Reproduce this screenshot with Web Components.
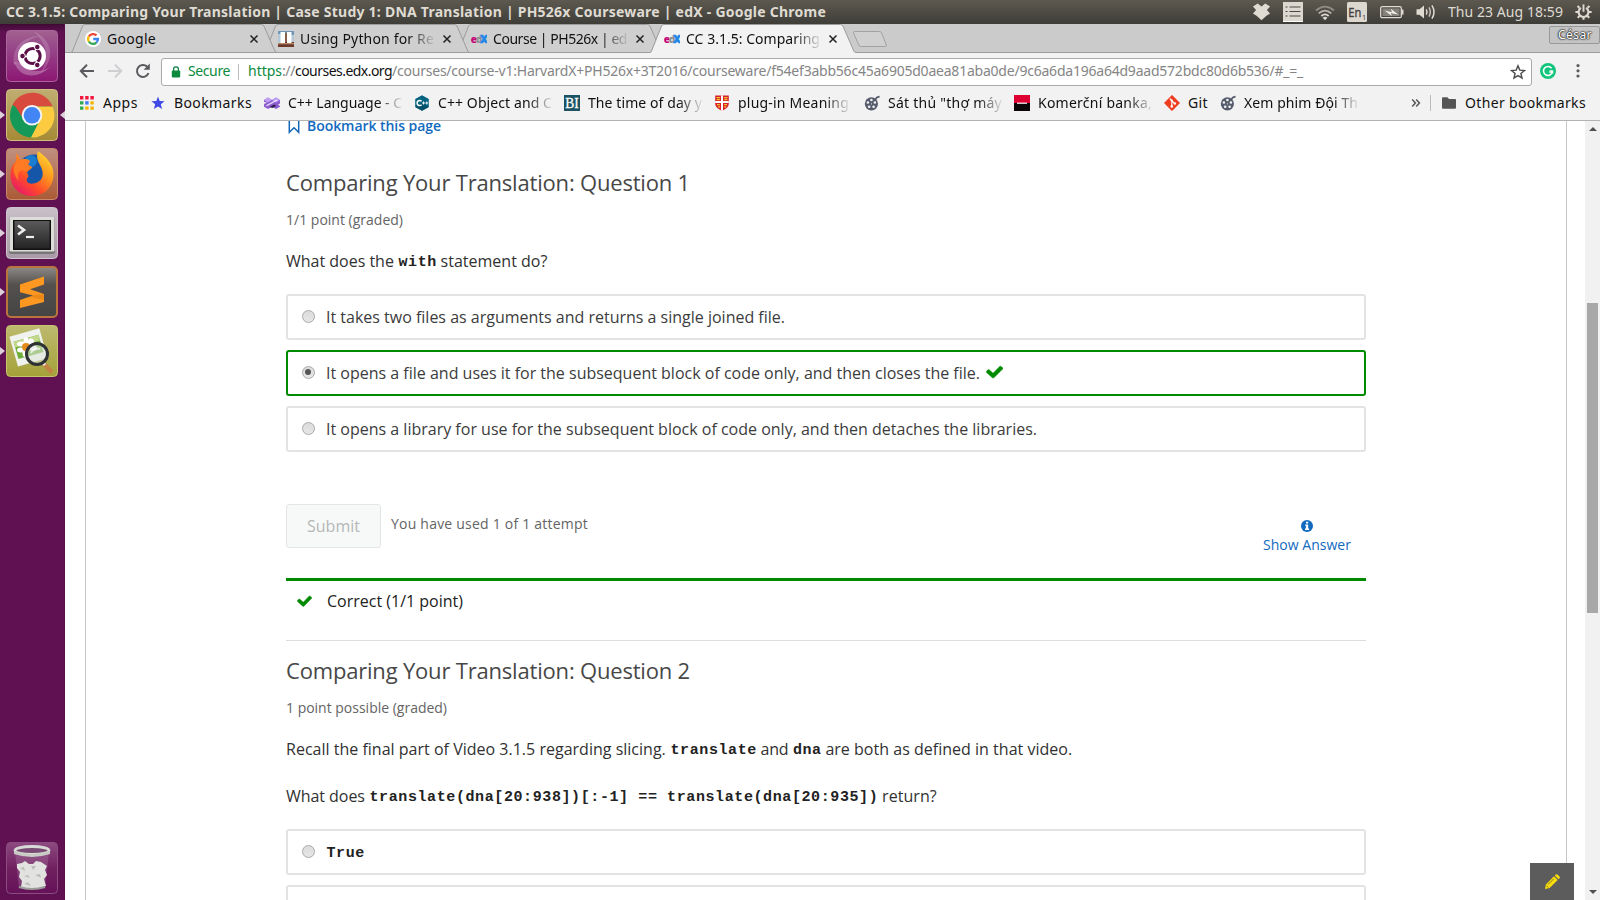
<!DOCTYPE html>
<html lang="en">
<head>
<meta charset="utf-8">
<title>CC 3.1.5: Comparing Your Translation</title>
<style>
html,body{margin:0;height:100%;overflow:hidden;background:#fff;font-family:"Open Sans","Noto Sans",sans-serif}
</style>
</head>
<body>
<desktop-screen></desktop-screen>
<script>
const ICONS = {
google:['0 0 16 16','<circle cx="8" cy="8" r="8" fill="#fff"/><g fill="none" stroke-width="2.3"><path d="M3.9 5.4A5 5 0 0 1 11.5 4.4" stroke="#ea4335"/><path d="M3.9 5.4A5 5 0 0 0 3.9 10.6" stroke="#fbbc05"/><path d="M3.9 10.6A5 5 0 0 0 11.4 11.6" stroke="#34a853"/><path d="M8.2 8H13A5 5 0 0 1 11.4 11.6" stroke="#4285f4"/></g>'],
photo:['0 0 16 16','<rect width="16" height="16" fill="#6f96b8"/><rect y="10" width="16" height="6" fill="#6b3a2a"/><path d="M0 3h3v9H0zM13 4h3v7h-3z" fill="#b4c8d6"/><path d="M2.500 1h4.500v11H2.500zM9 1h4.500v11H9z" fill="#fff"/><path d="M7 2h2v9H7z" fill="#8b5c48"/><path d="M0 12h16v1.3H0z" fill="#b98a6c"/>'],
edx:['0 0 16 16','<g font-family="Open Sans,sans-serif" font-weight="800"><text x="-.2" y="12" font-size="10" fill="#c5057b">e</text><text x="4.8" y="12" font-size="10" fill="#8a8f94">d</text><text x="9.2" y="12" font-size="10.5" fill="#1f86e8" stroke="#1f86e8" stroke-width=".5">X</text></g>'],
close:['0 0 10 10','<path d="M1.5 1.5l7 7M8.5 1.5l-7 7" stroke="#222" stroke-width="1.5"/>'],
back:['0 0 16 16','<path d="M15 8H2.5M8 1.8L1.8 8 8 14.2" fill="none" stroke="#5a5a5e" stroke-width="2"/>'],
fwd:['0 0 16 16','<path d="M1 8h12.5M8 1.8L14.2 8 8 14.2" fill="none" stroke="#cfcfd1" stroke-width="2"/>'],
reload:['0 0 16 16','<path d="M13.5 10.2A6 6 0 1 1 12.2 3.7" fill="none" stroke="#5a5a5e" stroke-width="2"/><path d="M14.8 .6v6.2H8.6z" fill="#5a5a5e"/>'],
lock:['0 0 10 12','<path d="M2.6 5.5V3.3a2.4 2.4 0 0 1 4.8 0v2.2" fill="none" stroke="#0b8043" stroke-width="1.3"/><rect x=".8" y="4.6" width="8.4" height="6.8" rx=".8" fill="#0b8a3e"/>'],
star:['0 0 16 16','<path d="M8 1.8l1.8 4.3 4.7.4-3.6 3 1.1 4.6L8 11.6l-4 2.5 1.1-4.6-3.6-3 4.7-.4z" fill="none" stroke="#4a4a4a" stroke-width="1.4"/>'],
grammarly:['0 0 16 16','<circle cx="8" cy="8" r="8" fill="#12c57c"/><path d="M11.6 5.2A4.5 4.5 0 1 0 12.4 9H9.2" fill="none" stroke="#fff" stroke-width="1.5"/><path d="M9.4 7.3h3.8v3.6z" fill="#fff"/>'],
dots:['0 0 4 16','<g fill="#5a5a5a"><circle cx="2" cy="2.6" r="1.6"/><circle cx="2" cy="7.8" r="1.6"/><circle cx="2" cy="13" r="1.6"/></g>'],
apps:['0 0 16 16','<path d="M1 1h3.4v3.4H1zM6.2 1h3.4v3.4H6.2zM11.4 1h3.4v3.4h-3.4z" fill="#f3163d"/><path d="M1 6.2h3.4v3.4H1zM1 11.4h3.4v3.4H1z" fill="#2ca94f"/><path d="M6.2 6.2h3.4v3.4H6.2z" fill="#4678f0"/><path d="M11.4 6.2h3.4v3.4h-3.4zM6.2 11.4h3.4v3.4H6.2zM11.4 11.4h3.4v3.4h-3.4z" fill="#f7b500"/>'],
bmstar:['0 0 16 16','<path d="M8 1.5l1.7 4.6 4.9.2-3.8 3 1.3 4.8L8 11.4l-4.1 2.7 1.3-4.8-3.8-3 4.9-.2z" fill="#4048e8"/>'],
cpl:['0 0 16 16','<path d="M0 5l4-2.500L8 5l4-2.500L16 5v3.500l-2 1.300 2 1.200v.8L12 14l-4-2.200L4 14l-4-2.200V9l3-1.600L0 7z" fill="#8d5ed0"/><path d="M0 5l4-2.500L8 5l4-2.500L16 5l-4 2.400L8 5 4 7.400z" fill="#bfa0f2"/><path d="M2.500 10.800L13 5" stroke="#efe6ff" stroke-width="1.300"/><path d="M5.500 12l4.500-2.600 2.500 1.400-4 2.200z" fill="#2f2150"/>'],
cpp:['0 0 16 16','<path d="M8 .2l6.8 3.9v7.8L8 15.8l-6.8-3.9V4.1z" fill="#056380"/><path d="M8 8l6.8 3.9L8 15.8l-6.8-3.9z" fill="#03506a"/><path d="M7.6 6.2a2.6 2.6 0 1 0 0 3.6" stroke="#fff" stroke-width="1.5" fill="none"/><path d="M8 8h3M9.5 6.5v3M11.3 8h3M12.8 6.5v3" stroke="#fff" stroke-width=".9"/>'],
bi:['0 0 16 16','<rect width="16" height="16" fill="#1c5264"/><text x="8" y="13" font-family="Liberation Serif,serif" font-size="14.500" text-anchor="middle" fill="#fff" stroke="#fff" stroke-width=".3" textLength="13.500" lengthAdjust="spacingAndGlyphs">BI</text>'],
shield:['0 0 16 16','<path d="M1.2.5h13.6v8c0 3.6-3.4 5.8-6.8 7.2C4.6 14.300 1.2 12.100 1.2 8.500z" fill="#d6202b"/><path d="M8 .5v15.200M1.200 7h13.600" stroke="#fff" stroke-width="2"/><path d="M2.400 2h3.600v1.200H2.400zM2.800 4h3v1.200h-3zM10 2h3.600v1.200H10zM10.300 4h3v1.200h-3zM3 9h2.800v1.200H3zM4 11.200h2v1.200H4zM10.200 9H13v1.200h-2.800zM10.200 11.200h2v1.200h-2z" fill="#f5c52c"/>'],
film:['0 0 16 16','<circle cx="7.400" cy="8.800" r="6.600" fill="#565c6c"/><path d="M11 4.500Q13 1.500 15.600 1.600" fill="none" stroke="#565c6c" stroke-width="1.600"/><g fill="#f2f2f2"><circle cx="7.400" cy="5" r="1.300"/><circle cx="3.900" cy="7.500" r="1.300"/><circle cx="10.900" cy="7.500" r="1.300"/><circle cx="5.200" cy="11.700" r="1.300"/><circle cx="9.600" cy="11.700" r="1.300"/><circle cx="7.400" cy="8.800" r=".6"/></g>'],
kb:['0 0 16 16','<rect width="16" height="16" fill="#0a0506"/><rect width="16" height="8" fill="#de0030"/><rect x="3" y="7.600" width="10" height="1.200" fill="#fff"/>'],
git:['0 0 16 16','<path d="M8 .300L15.700 8 8 15.700.300 8z" fill="#f03c1e" stroke="#f03c1e" stroke-linejoin="round" stroke-width=".6"/><path d="M5.800 3.500l2 2v6M8 6l2.700 2.500" stroke="#fff" stroke-width="1.100" fill="none"/><g fill="#fff"><circle cx="7.800" cy="5.600" r="1.200"/><circle cx="7.800" cy="11.400" r="1.300"/><circle cx="10.800" cy="8.500" r="1.300"/></g>'],
folder:['0 0 16 16','<path d="M1 3.200Q1 2.200 2 2.200h4.400l1.600 1.700h6q1 0 1 1v7.900q0 1-1 1H2q-1 0-1-1z" fill="#555"/>'],
more:['0 0 10 10','<path d="M1.200 1.600L4.400 5 1.200 8.400M5.200 1.600L8.400 5 5.200 8.400" fill="none" stroke="#555" stroke-width="1.500"/>'],
dropbox:['0 0 20 20','<path d="M6 1.500L10 4.800l4-3.300L19 4.800 15.700 8.400 19 12l-3.800 2.600L10 19.300l-5.200-4.700L1 12l3.300-3.600L1 4.800z" fill="#dfdbd2"/>'],
list:['0 0 20 20','<rect width="20" height="20" fill="#dcd8d0"/><path d="M2.500 5h2M6.500 5h11M2.500 9.500h2M6.500 9.500h11M2.500 14h2M6.500 14h11" stroke="#4a4944" stroke-width="1.200"/><path d="M0 19.500h20" stroke="#fff"/>'],
wifi:['0 0 20 20','<g fill="none" stroke-width="1.800"><path d="M1 8.500Q10 .8 19 8.500" stroke="#8f8c84"/><path d="M3.700 11.400Q10 5.800 16.300 11.400" stroke="#bab6ae"/><path d="M6.300 14Q10 10.800 13.700 14" stroke="#dfdbd2"/></g><path d="M10 18.300l-2.400-2.600q2.400-1.700 4.800 0z" fill="#dfdbd2"/>'],
en:['0 0 20 20','<rect width="20" height="20" rx="1.500" fill="#dcd8d0"/><text x="1.300" y="15" font-family="Open Sans,sans-serif" font-size="13" fill="#42413c" stroke="#42413c" stroke-width=".4" textLength="13" lengthAdjust="spacingAndGlyphs">En</text><text x="15" y="18" font-family="Open Sans,sans-serif" font-size="7.500" fill="#42413c">1</text>'],
battery:['0 0 24 14','<rect x=".7" y="1.700" width="20.600" height="11" rx="1.500" fill="none" stroke="#dfdbd2" stroke-width="1.300"/><rect x="2.500" y="3.400" width="17" height="7.600" fill="#85827b"/><path d="M22.600 4.600v5" stroke="#dfdbd2" stroke-width="1.800"/><path d="M4.500 5.500l7.500 1.700-1.200-3.500 7.500 6-7.500-1.800 1 3.200z" fill="#f2efe8"/>'],
volume:['0 0 20 16','<path d="M.5 5.200h3L8 1.500v13L3.500 10.800h-3z" fill="#dfdbd2"/><g fill="none" stroke="#dfdbd2" stroke-width="1.500"><path d="M10.300 5.400q1.500 2.600 0 5.200"/><path d="M13 3.400q2.600 4.600 0 9.200" stroke="#c9c5bd"/><path d="M15.900 1.300q4.200 6.700 0 13.400"/></g>'],
power:['0 0 18 18','<g fill="none" stroke="#dfdbd2"><path d="M6.200 5.200A5.200 5.200 0 1 0 11.800 5.200" stroke-width="2.200"/><path d="M9 1.500v7.800" stroke-width="2"/><path d="M4.600 5.100L2.700 3.200M13.400 5.100l1.900-1.900M3.200 9.600H.4M17.600 9.600h-2.800M4.800 13.800l-1.900 1.900M13.200 13.800l1.900 1.900M9 15v2.800" stroke-width="2.200"/></g>'],
check:['0 0 16 14','<path d="M15.700 3.600L7.600 11.800q-.9.900-1.800 0L.5 6.900q-.5-.6 0-1.100l1.300-1.300q.6-.5 1.200 0l3.700 3.200L12.900 1.300q.6-.5 1.200 0l1.600 1.300q.5.500 0 1z" fill="#008a00" stroke="#008a00" stroke-width=".5"/>'],
bookmark:['0 0 12 15','<path d="M1.300 1h9.400v12.300L6 8.800l-4.700 4.500z" fill="none" stroke="#1466b8" stroke-width="1.500"/>'],
info:['0 0 12 12','<circle cx="6" cy="6" r="6" fill="#126ac0"/><path d="M5 1.800h2.200v1.700H5zM4.200 4.600h3v4h.9v1.300H4V8.600h.9V5.800h-.7z" fill="#fff"/>'],
pencil:['0 0 16 16','<path d="M1 15l.9-4.600L10 2.300l3.700 3.700-8.100 8.100z" fill="#f8dc0c"/><path d="M10.800 1.500l1-1q.8-.6 1.600 0l2.100 2.100q.6.8 0 1.600l-1 1z" fill="#f8dc0c"/><path d="M4 10.600l5.800-5.800M2.500 11.700l1.800 1.800" stroke="#77702f" stroke-width=".9"/>'],
ubuntu:['0 0 52 52','<defs><linearGradient id="g" x2="0" y2="1"><stop stop-color="#a2628f"/><stop offset=".35" stop-color="#97468a"/><stop offset="1" stop-color="#8d1673"/></linearGradient></defs><rect x=".5" y=".5" width="51" height="51" rx="4" fill="url(#g)" stroke="#a9659b"/><path d="M8 35C5 18 17 6 34 6 20 9 12 19 14 30" fill="#fff" opacity=".16"/><path d="M27 1C47 10 50 29 34 44 44 28 42 14 27 1z" fill="#fff" opacity=".17"/><path d="M8 32C14 49 32 49 44 37 35 43 22 43 13 32z" fill="#fff" opacity=".25"/><circle cx="26" cy="26" r="14" fill="#fff"/><circle cx="26.500" cy="26" r="7.600" fill="none" stroke="#5c1048" stroke-width="3" stroke-dasharray="14.300 1.600" stroke-dashoffset="-8"/><g fill="#5c1048" stroke="#fff" stroke-width="1"><circle cx="16.500" cy="26" r="2.800"/><circle cx="31.300" cy="17" r="2.800"/><circle cx="31.300" cy="35" r="2.800"/></g>'],
chrome:['0 0 52 52','<defs><linearGradient id="g" x2="0" y2="1"><stop stop-color="#c0ad72"/><stop offset="1" stop-color="#a58a35"/></linearGradient></defs><rect x=".5" y=".5" width="51" height="51" rx="4" fill="url(#g)" stroke="#cfbe82"/><circle cx="26" cy="26.500" r="22" fill="#149958"/><path d="M26 26.500L6.500 16A22 22 0 0 1 46.600 17.500L26 17.500z" fill="#d94a3e"/><path d="M26 17.500H46.500A22 22 0 0 1 25 48.500L34 31z" fill="#fdcb3f"/><path d="M7.500 14.500L18 31l8-13.500z" fill="#d94a3e"/><circle cx="26" cy="26.300" r="10.300" fill="#f4f4f4"/><circle cx="26" cy="26.300" r="8.300" fill="#4285f4"/>'],
firefox:['0 0 52 52','<defs><linearGradient id="g" x2="0" y2="1"><stop stop-color="#c09080"/><stop offset="1" stop-color="#ab5a35"/></linearGradient><linearGradient id="f" x1="1" y1="0" x2=".2" y2="1"><stop stop-color="#ffe93a"/><stop offset=".4" stop-color="#ff9a1e"/><stop offset=".7" stop-color="#ff4a2a"/><stop offset="1" stop-color="#e5156e"/></linearGradient></defs><rect x=".5" y=".5" width="51" height="51" rx="4" fill="url(#g)" stroke="#c78b6c"/><circle cx="28" cy="23" r="16.500" fill="#1556a8"/><circle cx="25" cy="13" r="6" fill="#1c8fe0" opacity=".7"/><path d="M32 3c8 6 16 13 15.500 24C47 40 37 48 26 48 13 48 4 38 4.500 26c.2-6 2.500-10 5.500-13l.500-8 4 7c3-1.500 7-1 9 .500l-2 4 5 3-5 4c-1 2 1 3 1 5-4 4-1 8 5 7 7-1 10-6 9-12-1-7-8-11-4.500-20.500z" fill="url(#f)"/><path d="M10 14c4-3 10-3 14-1l-2 4 4 2-5 4-5-1c-4 1-5 6-3 11-6-6-7-13-3-19z" fill="#ff7a22"/>'],
terminal:['0 0 52 52','<defs><linearGradient id="g" x2="0" y2="1"><stop stop-color="#c9c0c8"/><stop offset="1" stop-color="#aa9aa9"/></linearGradient><linearGradient id="t" x2="0" y2="1"><stop stop-color="#5a5a5a"/><stop offset="1" stop-color="#242424"/></linearGradient></defs><rect x=".5" y=".5" width="51" height="51" rx="4" fill="url(#g)" stroke="#cfc5cf"/><rect x="3" y="10" width="46" height="37" rx="2" fill="#777"/><rect x="3.500" y="10" width="45" height="34.500" rx="1" fill="#dcdcd8"/><rect x="7" y="13" width="38" height="30" fill="#111"/><rect x="8.500" y="14" width="35" height="27.500" fill="url(#t)"/><path d="M12 18.500l6 4.500-6 4.500" fill="none" stroke="#eee" stroke-width="2.600"/><path d="M20 30h8" stroke="#eee" stroke-width="2.200"/>'],
sublime:['0 0 52 52','<defs><linearGradient id="g" x2="0" y2="1"><stop stop-color="#8c8986"/><stop offset=".35" stop-color="#54514f"/><stop offset="1" stop-color="#444"/></linearGradient></defs><rect x="1" y="1" width="50" height="50" rx="4" fill="url(#g)" stroke="#b9753c" stroke-width="2"/><path d="M14 18.500L38 10.500v8L24 23.300l14 4.800v8L14 42v-8l13-4.400L14 26.200z" fill="#ff9820"/><path d="M38 28v6L24 31l5-2z" fill="#d87a12" opacity=".5"/>'],
viewer:['0 0 52 52','<defs><linearGradient id="g" x2="0" y2="1"><stop stop-color="#bdb96f"/><stop offset="1" stop-color="#a5a23a"/></linearGradient></defs><rect x=".5" y=".5" width="51" height="51" rx="4" fill="url(#g)" stroke="#c6c46c"/><g transform="rotate(-16 22 22)"><rect x="7" y="7" width="31" height="31" fill="#f0f2f0"/><rect x="9.500" y="13" width="26" height="18" fill="#6fae38"/><path d="M9.500 13h26v6h-26z" fill="#c3d88c"/></g><g fill="#fff"><ellipse cx="20" cy="16" rx="2.500" ry="4"/><ellipse cx="15" cy="19" rx="4" ry="2.500"/><ellipse cx="15" cy="25" rx="4" ry="2.500"/><ellipse cx="25" cy="17" rx="3" ry="3.500"/><ellipse cx="19" cy="28" rx="2.500" ry="4"/><ellipse cx="27" cy="23" rx="4" ry="3"/></g><circle cx="20" cy="22" r="4" fill="#e58a1c"/><path d="M38 39l8 8.500" stroke="#c28345" stroke-width="4.500"/><path d="M36 37l3 3" stroke="#eee" stroke-width="3"/><circle cx="31" cy="29" r="10.500" fill="#dce3d8" fill-opacity=".55" stroke="#2e3235" stroke-width="3"/><path d="M25 28q3-6 9-4" stroke="#fff" stroke-width="2" fill="none" opacity=".7"/>'],
trash:['0 0 52 52','<defs><linearGradient id="g" x2="0" y2="1"><stop stop-color="#8d4a80"/><stop offset=".5" stop-color="#702060"/><stop offset="1" stop-color="#66125a"/></linearGradient></defs><rect x=".5" y=".5" width="51" height="51" rx="4" fill="url(#g)" stroke="#8b4c80"/><path d="M9 10h34l-4 36q-13 4-26 0z" fill="#b58fae" opacity=".3"/><path d="M11 22l5-1 3-2 4 3 4 0 3-3 5 1 3 2 3 2-2 4 2 5-3 4 2 7-7 2-9 1-9-2 1-6-3-4 1-5-3-4z" fill="#e2e2e0"/><path d="M14 26l4-1 1 4zM25 24l2 4 3-4zM18 34l4-1 2 3zM29 33l5-1 1 4zM18 42l4-2 3 4zM30 43l4-2z" fill="#bdbdba"/><path d="M13 45q13 4 26 0" stroke="#9c9c9a" stroke-width="2" fill="none"/><ellipse cx="26" cy="8.500" rx="17" ry="4" fill="#7a4b72" stroke="#d8dad5" stroke-width="2.800"/><path d="M8 9v3q18 6 36 0V9q-18 6-36 0z" fill="#c9cbc5"/>']
};

const define = (name, css, html, init) => customElements.define(name, class extends HTMLElement {
  constructor(){ super(); this.attachShadow({mode:'open'}); }
  connectedCallback(){
    if (this.ready) return;
    this.ready = true;
    const a = n => this.getAttribute(n) || '';
    this.shadowRoot.innerHTML = `<style>*{box-sizing:border-box}${css}</style>` + (typeof html === 'function' ? html(a) : html);
    if (init) init(this, a);
  }
});

define('ui-icon', ':host{display:block;flex:none}svg{display:block;width:100%;height:100%}', a => {
  const [vb, body] = ICONS[a('name')];
  return `<svg viewBox="${vb}" aria-hidden="true">${body}</svg>`;
}, (el, a) => {
  const [, , w, h] = ICONS[a('name')][0].split(' ');
  el.style.width = (a('w') || w) + 'px';
  el.style.height = (a('h') || h) + 'px';
});

/* Text run whose tracking is adjusted so that it fills a given width. */
define('fit-text', ':host{display:inline-block;white-space:pre;flex:none}', '<slot></slot>', (el, a) => {
  const n = el.textContent.length, w = parseFloat(a('w'));
  el.style.letterSpacing = ((w - el.getBoundingClientRect().width) / n) + 'px';
  el.style.width = w + 'px';
  if (a('fade')) el.style.webkitMaskImage = `linear-gradient(to right,#000 calc(100% - ${a('fade')}px),rgba(0,0,0,.08))`;
});

define('menu-bar', `:host{display:flex;align-items:center;height:24px;padding:0 8px 1px 6px;background:linear-gradient(#5d5950,#3e3d38);color:#dfdbd2;font:14px/22px "Noto Sans",sans-serif}
b{flex:1}.tray{display:flex;align-items:center}`,
`<b><fit-text w="820">CC 3.1.5: Comparing Your Translation | Case Study 1: DNA Translation | PH526x Courseware | edX - Google Chrome</fit-text></b>
<div class="tray">
<ui-icon name="dropbox" w="19" h="19" style="margin-right:12px"></ui-icon>
<ui-icon name="list" style="margin-right:12px"></ui-icon>
<ui-icon name="wifi" style="margin-right:12px"></ui-icon>
<ui-icon name="en" style="margin-right:13px"></ui-icon>
<ui-icon name="battery" style="margin-right:12px"></ui-icon>
<ui-icon name="volume" style="margin-right:12px"></ui-icon>
<fit-text w="115" style="margin-right:12px">Thu 23 Aug 18:59</fit-text>
<ui-icon name="power" w="17" h="17"></ui-icon></div>`);

define('launcher-item', `:host{display:flex;align-items:center;width:65px;height:52px}
i{width:0;height:0;border:4px solid transparent;border-left:5px solid #ddd0da;border-right:0;margin-right:1px}
i.off{visibility:hidden}i.r{border-left:0;border-right:5px solid #ddd0da;margin:0 0 0 2px}`,
a => `<i class="${a('run') ? '' : 'off'}"></i><ui-icon name="${a('icon')}"></ui-icon>${a('active') ? '<i class="r"></i>' : ''}`);

define('app-launcher', `:host{display:flex;flex-direction:column;gap:7px;width:65px;flex:none;padding:6px 0;background:linear-gradient(#3f0a35,#5f1151 8px,#5f1151);box-shadow:inset -1px 0 #54104a}
.sp{flex:1}`,
`<launcher-item icon="ubuntu"></launcher-item><launcher-item icon="chrome" run="1" active="1"></launcher-item><launcher-item icon="firefox" run="1"></launcher-item><launcher-item icon="terminal" run="1"></launcher-item><launcher-item icon="sublime" run="1"></launcher-item><launcher-item icon="viewer" run="1"></launcher-item><div class="sp"></div><launcher-item icon="trash"></launcher-item>`);

define('browser-tab', `:host{display:grid;width:206px;height:29px;margin-right:-13px;position:relative;flex:none}
svg{grid-area:1/1;width:206px;height:29px;display:block}
.in{grid-area:1/1;display:flex;align-items:center;padding:0 0 0 14px;position:relative}
.t{margin:0 8px 0 6px;width:134px}`,
a => `<svg viewBox="0 0 206 29"><path d="M0 29V28.500Q1 28.500 1.500 27L11.500 2.200Q12.200.500 14 .500H190.500Q192.200.500 193 2.200L203.800 27Q204.500 28.500 206 28.500V29z" fill="${a('active') ? '#f2f2f2' : '#cfcfcf'}"/><path d="M0 28.500Q1 28.500 1.500 27L11.500 2.200Q12.200.500 14 .500H190.500Q192.200.500 193 2.200L203.800 27Q204.500 28.500 206 28.500${a('active') ? '' : 'z'}" fill="none" stroke="#9c9c9c"/></svg>
<div class="in"><ui-icon name="${a('icon')}"></ui-icon><div class="t"><fit-text w="${a('w')}" fade="${a('fade')}">${a('label')}</fit-text></div><ui-icon name="close"></ui-icon></div>`);

define('tab-strip', `:host{display:flex;height:29px;padding-left:6px;background:linear-gradient(#cbcbcb,#cbcbcb 28px,#9c9c9c 28px);font:14px/20px "Noto Sans",sans-serif;color:#111}
.new{margin:6px 0 0 9px;width:36px;height:19px;display:block}
.user{margin:2px 0 0 auto;width:51px;height:18px;border:1px solid #999;border-radius:2px;background:#c4c4c4;padding-left:8px;color:#fff;font-size:12px;line-height:16px;text-shadow:0 0 1px #222,0 0 1px #222,0 0 2px #333,0 0 2px #333}`,
`<browser-tab icon="google" label="Google" w="49" style="z-index:3"></browser-tab>
<browser-tab icon="photo" label="Using Python for Re" w="134" fade="26" style="z-index:2"></browser-tab>
<browser-tab icon="edx" label="Course | PH526x | ed" w="134" fade="26" style="z-index:1"></browser-tab>
<browser-tab icon="edx" label="CC 3.1.5: Comparing" w="134" fade="26" active="1" style="z-index:4"></browser-tab>
<svg class="new" viewBox="0 0 36 19"><path d="M2.500 1.500H27.500Q29 1.500 29.600 3L34.300 15Q34.800 16.500 33.500 16.500H9Q7.500 16.500 6.800 15L1.500 3Q1 1.500 2.500 1.500z" fill="#d0d0d0" stroke="#a2a2a2"/></svg>
<div class="user"><fit-text w="34">César</fit-text></div>`);

define('address-bar', `:host{display:flex;align-items:center;height:33px;padding:3px 20px 0 14px;font:14px/20px "Noto Sans",sans-serif;color:#858585}
.box{flex:1;margin:1px 8px 0 10px;height:28px;border:1px solid #aaa;border-radius:3px;background:#fff;display:flex;align-items:center;padding:0 5px 0 9px}
fit-text{margin-bottom:2px}
.sec,.g{color:#0b8a3e}.sep{width:1px;height:16px;background:#bbb;margin:0 9px 0 8px}.host{color:#111}`,
`<ui-icon name="back"></ui-icon><ui-icon name="fwd" style="margin-left:12px"></ui-icon><ui-icon name="reload" style="margin-left:12px"></ui-icon>
<div class="box"><ui-icon name="lock"></ui-icon><fit-text class="sec" w="42" style="margin-left:7px">Secure</fit-text><span class="sep"></span><fit-text class="g" w="34">https</fit-text><fit-text w="13">://</fit-text><fit-text class="host" w="97">courses.edx.org</fit-text><fit-text w="911">/courses/course-v1:HarvardX+PH526x+3T2016/courseware/f54ef3abb56c45a6905d0aea81aba0de/9c6a6da196a64d9aad572bdc80d6b536/#_=_</fit-text><ui-icon name="star" style="margin-left:auto"></ui-icon></div>
<ui-icon name="grammarly"></ui-icon><ui-icon name="dots" style="margin-left:20px"></ui-icon>`);

define('bookmark-item', ':host{display:flex;align-items:center;gap:8px;flex:none}.t{overflow:hidden;height:20px}fit-text{vertical-align:top}',
a => `<ui-icon name="${a('icon')}"></ui-icon><div class="t" style="width:${a('box') || a('w')}px"></div>`,
(el, a) => { const n = document.createElement('fit-text'); n.textContent = a('label'); n.setAttribute('w', a('w')); if (a('fade')) n.setAttribute('fade', a('fade')); el.shadowRoot.querySelector('.t').append(n); });

define('bookmarks-bar', `:host{display:flex;align-items:center;gap:12px;height:35px;padding:0 14px 1px 14px;border-bottom:1px solid #b2b2b2;font:14px/20px "Noto Sans",sans-serif;color:#111}
.sep{width:1px;height:16px;background:#bbb;margin-right:-2px}`,
`<bookmark-item icon="apps" label="Apps" w="35"></bookmark-item>
<bookmark-item icon="bmstar" label="Bookmarks" w="78"></bookmark-item>
<bookmark-item icon="cpl" label="C++ Language - C" w="114" fade="24"></bookmark-item>
<bookmark-item icon="cpp" label="C++ Object and C" w="114" fade="24"></bookmark-item>
<bookmark-item icon="bi" label="The time of day y" w="114" fade="24"></bookmark-item>
<bookmark-item icon="shield" label="plug-in Meaning" w="111" box="114" fade="24"></bookmark-item>
<bookmark-item icon="film" label="Sát thủ &quot;thợ máy" w="114" fade="24"></bookmark-item>
<bookmark-item icon="kb" label="Komerční banka," w="114" fade="24"></bookmark-item>
<bookmark-item icon="git" label="Git" w="20"></bookmark-item>
<bookmark-item icon="film" label="Xem phim Đội Th" w="114" fade="24"></bookmark-item>
<ui-icon name="more" style="margin-left:auto;margin-right:-3px"></ui-icon><span class="sep"></span>
<bookmark-item icon="folder" label="Other bookmarks" w="121"></bookmark-item>`);

define('answer-choice', `:host{display:flex;align-items:flex-start;height:46px;box-sizing:border-box;border:2px solid #e3e3e3;border-radius:3px;padding:9px 0 0 13px;font-size:16px;line-height:24px;color:#3c3c3c}
:host([correct]){border-color:#008a00}
.radio{width:13px;height:13px;border-radius:50%;border:1px solid #a9a9a9;background:linear-gradient(#dcdcdc,#e6e6e6);margin:4.5px 11.500px 0 .500px;display:grid;place-items:center;flex:none}
.radio.on::after{content:"";width:6px;height:6px;border-radius:50%;background:#555}
ui-icon{margin:4px 0 0 6px}`,
a => `<span class="radio ${a('correct') ? 'on' : ''}"></span><slot></slot>${a('correct') ? '<ui-icon name="check" w="17" h="15"></ui-icon>' : ''}`);

define('problem-block', `:host{display:block}
h3{margin:0;font-weight:400;font-size:22px;line-height:30px;color:#474747}
.pts{margin-top:13px;font-size:14px;line-height:20px;color:#646464;height:20px}
.q{margin-top:19px;color:#313131}.c{margin-top:21px;display:flex;flex-direction:column;gap:10px}`,
a => `<h3><fit-text w="${a('hw')}">${a('heading')}</fit-text></h3><div class="pts"><fit-text w="${a('pw')}">${a('points')}</fit-text></div><div class="q"><slot name="q"></slot></div><div class="c"><slot></slot></div>`);

define('rich-line', `:host{display:flex;height:24px;font-size:16px;line-height:24px;white-space:pre;color:#313131}
:host(.second){margin-top:23px}`, '<slot></slot>');

define('code-run', ':host{display:inline-block;white-space:pre;font:bold 15px/24px "Liberation Mono",monospace;letter-spacing:.599px;padding-top:2px;position:relative;left:.500px;color:#222}', '<slot></slot>');

define('submit-row', `:host{display:flex;height:44px;margin-top:52px;color:#646464;font-size:14px;line-height:20px}
button{width:95px;height:44px;border:1px solid #e4e6e6;border-radius:3px;background:#f7f9f9;color:#b4b7b6;font:16px/24px "Open Sans",sans-serif;padding:0}
.u{margin:10px 0 0 10px;height:20px}
.show{margin:16px 15px 0 auto;display:flex;flex-direction:column;align-items:center;gap:3px;color:#126ac0}`,
`<button><fit-text w="53">Submit</fit-text></button><span class="u"><fit-text w="197">You have used 1 of 1 attempt</fit-text></span><span class="show"><ui-icon name="info"></ui-icon><fit-text w="88">Show Answer</fit-text></span>`);

define('result-note', `:host{display:flex;height:63px;box-sizing:border-box;margin:30px 0 14px;border-top:3px solid #008a00;border-bottom:1px solid #ddd;padding:8px 0 0 10.500px;font-size:16px;line-height:24px;color:#222}
ui-icon{margin:6px 15.500px 0 0}`, `<ui-icon name="check" w="15" h="13"></ui-icon><fit-text w="136">Correct (1/1 point)</fit-text>`);

define('page-scrollbar', `:host{display:flex;flex-direction:column;align-items:center;width:15px;flex:none;background:#f1f1f1}
.up,.dn{width:0;height:0;border:4px solid transparent}.up{border-top:0;border-bottom:4px solid #505050;margin-top:6px}.dn{border-bottom:0;border-top:4px solid #505050;margin:auto 0 6px}
.th{width:11px;height:310px;background:#a8a8a8;margin-top:172px}`, '<span class="up"></span><span class="th"></span><span class="dn"></span>');

define('course-page', `:host{display:flex;flex:1;min-height:0;background:#fff;position:relative;overflow:hidden}
.paper{margin-left:20px;width:1482px;border:solid #c8c8c8;border-width:0 1px;padding:0 200px;flex:none;overflow:hidden}
.bm{display:flex;height:15px;margin:0 0 31px;padding-left:2px;color:#126ac0;font-size:14px;line-height:10px;font-weight:600}
.bm ui-icon{margin:-2px 7px 0 0}
page-scrollbar{margin-left:auto}
.edit{position:absolute;right:26px;bottom:0;width:44px;height:37px;background:#5c5c5c;display:grid;place-items:center;padding-right:1px}`,
`<div class="paper"><div class="bm"><ui-icon name="bookmark"></ui-icon><fit-text w="134">Bookmark this page</fit-text></div>
<problem-block heading="Comparing Your Translation: Question 1" hw="404" points="1/1 point (graded)" pw="117">
<rich-line slot="q"><fit-text w="112">What does the </fit-text><code-run>with</code-run><fit-text w="111"> statement do?</fit-text></rich-line>
<answer-choice><fit-text w="459">It takes two files as arguments and returns a single joined file.</fit-text></answer-choice>
<answer-choice correct="1"><fit-text w="654">It opens a file and uses it for the subsequent block of code only, and then closes the file.</fit-text></answer-choice>
<answer-choice><fit-text w="711">It opens a library for use for the subsequent block of code only, and then detaches the libraries.</fit-text></answer-choice>
</problem-block>
<submit-row></submit-row><result-note></result-note>
<problem-block heading="Comparing Your Translation: Question 2" hw="404" points="1 point possible (graded)" pw="161">
<rich-line slot="q"><fit-text w="384">Recall the final part of Video 3.1.5 regarding slicing. </fit-text><code-run>translate</code-run><fit-text w="36"> and </fit-text><code-run>dna</code-run><fit-text w="251"> are both as defined in that video.</fit-text></rich-line>
<rich-line slot="q" class="second"><fit-text w="83">What does </fit-text><code-run>translate(dna[20:938])[:-1] == translate(dna[20:935])</code-run><fit-text w="59"> return?</fit-text></rich-line>
<answer-choice><code-run>True</code-run></answer-choice>
<answer-choice></answer-choice>
</problem-block></div>
<page-scrollbar></page-scrollbar><div class="edit"><ui-icon name="pencil"></ui-icon></div>`);

define('browser-window', ':host{display:flex;flex-direction:column;flex:1;min-width:0;background:#f2f2f2}',
'<tab-strip></tab-strip><address-bar></address-bar><bookmarks-bar></bookmarks-bar><course-page></course-page>');

define('desktop-screen', ':host{display:flex;flex-direction:column;width:1600px;height:900px;overflow:hidden}.row{display:flex;flex:1;min-height:0}',
'<menu-bar></menu-bar><div class="row"><app-launcher></app-launcher><browser-window></browser-window></div>');
</script>
</body>
</html>
